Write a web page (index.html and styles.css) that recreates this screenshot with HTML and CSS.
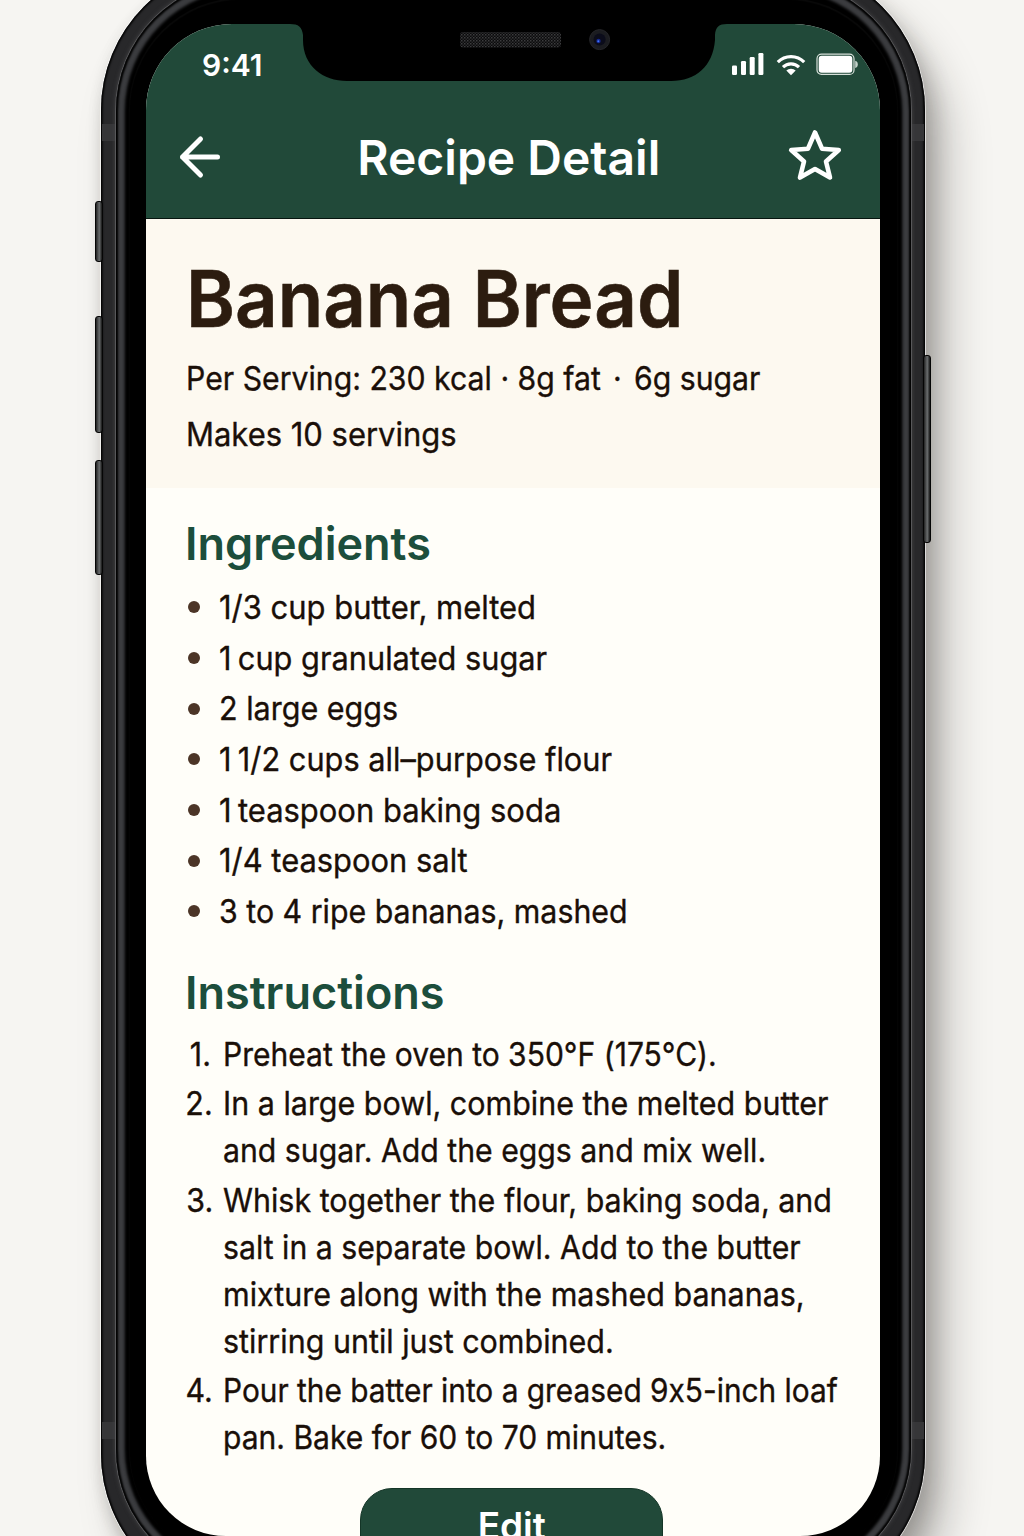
FILE: index.html
```
<!DOCTYPE html>
<html lang="en">
<head>
<meta charset="utf-8">
<title>Recipe Detail</title>
<link rel="stylesheet" href="styles.css">
</head>
<body>
<div class="phone">
  <i class="key key-mute"></i><i class="key key-up"></i><i class="key key-down"></i><i class="key key-power"></i>
  <i class="band band-top"></i><i class="band band-bottom"></i>
  <div class="ring">
    <div class="bezel">
      <main class="screen">
        <header class="topbar">
          <div class="status">
            <span class="time">9:41</span>
            <div class="status-icons">
              <svg width="33" height="24" viewBox="0 0 33 24" fill="#fff"><rect x="1" y="13.5" width="5" height="9.5" rx="1.2"/><rect x="10" y="9" width="5" height="14" rx="1.2"/><rect x="18.7" y="5" width="5" height="18" rx="1.2"/><rect x="27.4" y="1" width="5" height="22" rx="1.2"/></svg>
              <svg width="30" height="24" viewBox="0 0 30 24" fill="none" stroke="#fff" stroke-width="3.2"><path d="M1.8 10.2a18.5 18.5 0 0 1 26.4 0"/><path d="M7 15.2a11.3 11.3 0 0 1 16 0"/><path d="M10.3 18.6a6.6 6.6 0 0 1 9.4 0L15 23.2z" fill="#fff" stroke="none"/></svg>
              <svg width="43" height="24" viewBox="0 0 43 24"><rect x="1" y="2.2" width="37" height="20.2" rx="4.5" fill="none" stroke="#d7e0da" stroke-width="1.2"/><rect x="2.7" y="3.8" width="33.6" height="17" rx="3" fill="#fff"/><path d="M39.2 8.7c1.8.4 2.6 1.5 2.6 3.6s-.8 3.2-2.6 3.6z" fill="#c3d1c9"/></svg>
            </div>
          </div>
          <nav class="nav">
            <svg class="back" width="44" height="44" viewBox="0 0 44 44" fill="none" stroke="#fff" stroke-width="5" stroke-linecap="round" stroke-linejoin="round"><path d="M39.5 22H4.5M22.5 4 4.500 22 22.500 40"/></svg>
            <span class="nav-title">Recipe Detail</span>
            <svg class="star" width="56" height="54" viewBox="0 0 56 54" fill="none" stroke="#fff" stroke-width="4.600" stroke-linejoin="round"><path d="M28 4.500 35 20.700 51.800 22 39 33.500 43 49.500 28 41 13 49.500 17 33.500 4.200 22 21 20.700z"/></svg>
          </nav>
        </header>
        <section class="hero">
          <h1><span class="fit f953">Banana Bread</span></h1>
          <p><span class="fit f918">Per Serving: 230 kcal · 8g fat <b class="dot">·</b> 6g sugar</span></p>
          <p><span class="fit f938">Makes 10 servings</span></p>
        </section>
        <section class="ingredients">
          <h2>Ingredients</h2>
          <ul>
            <li><span class="fit f938">1/3 cup butter, melted</span></li>
            <li><span class="fit f932 tight">1 cup granulated sugar</span></li>
            <li><span class="fit f925">2 large eggs</span></li>
            <li><span class="fit f932 tight">1 1/2 cups all–purpose flour</span></li>
            <li><span class="fit f938 tight">1 teaspoon baking soda</span></li>
            <li><span class="fit f936">1/4 teaspoon salt</span></li>
            <li><span class="fit f919">3 to 4 ripe bananas, mashed</span></li>
          </ul>
        </section>
        <section class="instructions">
          <h2>Instructions</h2>
          <ol>
            <li><span class="fit f909">Preheat the oven to 350°F (175°C).</span></li>
            <li><span class="fit f923">In a large bowl, combine the melted butter</span><span class="fit f918">and sugar. Add the eggs and mix well.</span></li>
            <li><span class="fit f922">Whisk together the flour, baking soda, and</span><span class="fit f918">salt in a separate bowl. Add to the butter</span><span class="fit f923">mixture along with the mashed bananas,</span><span class="fit f923">stirring until just combined.</span></li>
            <li><span class="fit f904">Pour the batter into a greased 9x5-inch loaf</span><span class="fit f909">pan. Bake for 60 to 70 minutes.</span></li>
          </ol>
        </section>
        <button class="edit">Edit</button>
      </main>
      <div class="notch">
        <svg width="440" height="60" viewBox="0 0 440 60">
          <defs><pattern id="mesh" width="3" height="3" patternUnits="userSpaceOnUse"><rect width="3" height="3" fill="#0b0b0c"/><rect width="1.500" height="1.500" fill="#3c3c3e"/><rect x="1.500" y="1.500" width="1.500" height="1.500" fill="#28282a"/></pattern></defs>
          <path d="M0 0H440V2H437C429 2 425.500 5 425 13V18C423 44 406 59 381 59H57C33 59 13 44 13 18V13C12 5 8.500 2 0 2z" fill="#000"/>
          <rect x="170" y="10" width="101" height="15.500" rx="3" fill="url(#mesh)"/>
          <circle cx="309.600" cy="17.600" r="10" fill="#1b1c20" stroke="#26262a"/><circle cx="309.600" cy="17.600" r="6" fill="#0b0c1a"/><circle cx="308.500" cy="19" r="2.200" fill="#16298c"/><circle cx="308.300" cy="19.200" r="1" fill="#3f74ff"/>
        </svg>
      </div>
    </div>
  </div>
</div>
</body>
</html>
```
FILE: styles.css
```
* { box-sizing: border-box; margin: 0; padding: 0; }
html, body { height: 1536px; overflow: hidden; }
body {
  background: #f6f5f2;
  font-family: Inter, "Liberation Sans", sans-serif;
  color: #1a0f08;
}

/* Device */
.phone {
  position: relative;
  width: 824px;
  height: 1636px;
  margin: -36px 0 0 101px;
  padding: 16px 14.5px 20px;
  border-radius: 146px;
  background: #28282a;
  box-shadow: inset 0 0 2px 1.5px #000, 0 0 0 1px rgba(255, 255, 255, .6),
    22px 34px 44px rgba(30, 28, 25, .26), 9px 16px 22px rgba(30, 28, 25, .22), -2px 4px 14px rgba(30, 28, 25, .06);
}
.ring {
  position: relative;
  height: 1600px;
  padding: 20px 14px 0;
  border-radius: 131px;
  background: #000;
  box-shadow: 0 0 0 1px #58585a, 0 0 4px 1px #444446, inset 0 0 2px 2px #000, inset 0 0 3px 9px #3b3c3f;
}
.bezel {
  position: relative;
  height: 1562px;
  padding: 24px 17px 26px 16.5px;
  border-radius: 112px;
  background: #000;
  box-shadow: 0 0 4px 3px #000, 0 -1px 1px 1px #2a2a2a;
}
.key {
  position: absolute;
  left: -6px;
  width: 8px;
  border: 1px solid #050505;
  border-radius: 3px;
  background: linear-gradient(90deg, #222, #6a6d6e 55%, #151515);
}
.key-mute { top: 237px; height: 61px; }
.key-up { top: 352px; height: 117px; }
.key-down { top: 496px; height: 115px; }
.key-power { left: auto; right: -6px; top: 391px; height: 188px; }
.band {
  position: absolute;
  left: 1px;
  right: 1px;
  height: 17px;
  background: #363638;
}
.band-top { top: 160px; }
.band-bottom { top: 1458px; }

.screen {
  display: flex;
  flex-direction: column;
  height: 1512px;
  border-radius: 86px 86px 80px 80px;
  overflow: hidden;
  background: #fffef9;
}
.notch { position: absolute; left: 160px; top: 22px; }
.notch svg { display: block; }

/* Header */
.topbar {
  height: 195px;
  flex: none;
  background: #214939;
  border-bottom: 1.5px solid #06150f;
  color: #fff;
}
.status {
  display: flex;
  justify-content: space-between;
  padding: 28px 21px 0 56px;
  height: 94px;
}
.time { font-size: 30px; font-weight: 600; line-height: 26px; }
.status-icons { display: flex; gap: 12px; height: 24px; }
.status-icons svg:last-child { margin-left: -2px; }
.nav {
  display: flex;
  justify-content: space-between;
  align-items: flex-start;
  padding: 0 36px 0 32px;
}
.back { margin-top: 17px; }
.nav-title {
  font-size: 48px;
  font-weight: 600;
  line-height: 60px;
  margin: 9.5px 0 0 8px;
  white-space: nowrap;
}
.star { margin-top: 10px; }

/* Condensed text lines */
.fit {
  display: block;
  width: max-content;
  white-space: pre;
  font-feature-settings: "calt" 0;
  transform-origin: 0 50%;
  transform: scaleX(var(--w));
}
.f953 { --w: .953; }
.f938 { --w: .938; }
.f936 { --w: .936; }
.f932 { --w: .932; }
.f925 { --w: .925; }
.f923 { --w: .923; }
.f922 { --w: .922; }
.f919 { --w: .919; }
.f918 { --w: .916; }
.f909 { --w: .91; }
.f904 { --w: .904; }
.tight::first-letter { letter-spacing: -2.5px; }

/* Recipe */
.hero {
  flex: none;
  height: 269px;
  padding: 40px 0 0 40px;
  background: #fdf9f0;
  font-size: 33px;
}
h1 { font-size: 78px; font-weight: 600; line-height: 80px; color: #2c1c0f; -webkit-text-stroke: .6px #2c1c0f; }
.hero p { line-height: 56px; }
.hero h1 + p { margin-top: 11px; }
.hero p, li { -webkit-text-stroke: .35px #1a0f08; }
.dot { font-weight: 400; margin: 0 4px; }

h2 {
  font-size: 45px;
  font-weight: 600;
  line-height: 54px;
  color: #1c4e3c;
}
.ingredients, .instructions {
  flex: none;
  padding-left: 39px;
  font-size: 33px;
}
.ingredients { padding-top: 29px; }
ul, ol { list-style: none; }
ul { margin-top: 11px; }
ul li {
  display: flex;
  align-items: center;
  gap: 19px;
  height: 50.7px;
  line-height: 50.7px;
}
ul li::before {
  content: "";
  flex: none;
  width: 12px;
  height: 12px;
  margin-left: 2.5px;
  border-radius: 50%;
  background: #4c3527;
}
.instructions { padding-top: 29px; }
ol { counter-reset: step; margin-top: 11px; }
ol li {
  counter-increment: step;
  display: grid;
  grid-template-columns: 28px max-content;
  column-gap: 10px;
  line-height: 47px;
  margin-bottom: 2.5px;
}
ol li .fit { grid-column: 2; }
ol li::before {
  content: counter(step) ".";
  grid-column: 1;
  justify-self: end;
  transform: scaleX(.92);
  transform-origin: 100% 50%;
}
ol li:first-child::before { margin-right: 2px; }
.edit {
  align-self: center;
  flex: none;
  width: 303px;
  height: 84px;
  margin: 24px 0 0 -2px;
  border: 1px solid #143527;
  border-radius: 32px;
  background: #214939;
  color: #fff;
  font: 600 37px/72px Inter, sans-serif;
  padding-bottom: 8px;
}
```
